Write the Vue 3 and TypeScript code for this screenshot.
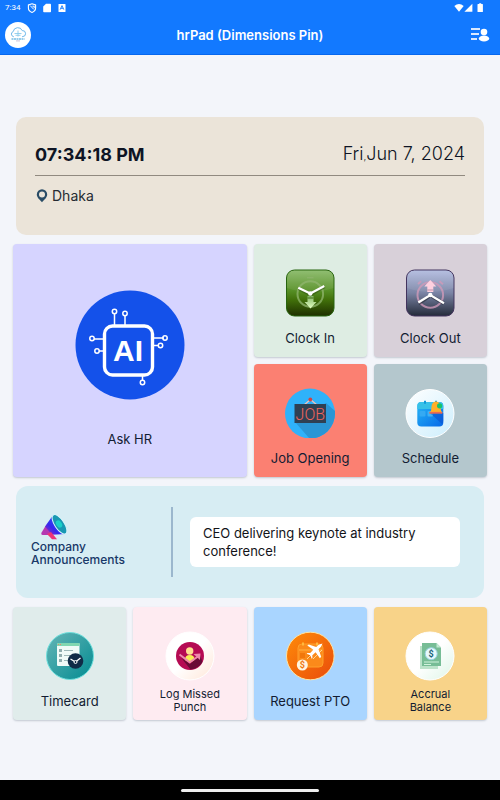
<script setup lang="ts">
import { ref } from 'vue'

const time = ref<string>('07:34:18 PM')
const weekday = ref<string>('Fri')
const date = ref<string>('Jun 7, 2024')
const city = ref<string>('Dhaka')
const announcement = ref<string>('CEO delivering keynote at industry conference!')
</script>

<template>
  <div class="screen">
    <header class="top">
      <div class="status">
        <span>7:34</span>
        <svg class="status-icon" viewBox="0 0 10 10" aria-hidden="true">
          <path d="M5 .8 8.600 2v3C8.600 7.200 7 8.700 5 9.400 3 8.700 1.400 7.200 1.400 5V2z" fill="none" stroke="#fff" stroke-width="1.100" />
          <path d="M3.200 2.600 6.800 6.400M5.400 3.200h1.800v2" fill="none" stroke="#fff" />
        </svg>
        <svg class="status-icon" viewBox="0 0 10 10" aria-hidden="true">
          <path d="M4 .7h4.200q.8 0 .8.8v7q0 .8-.8.8H2q-.8 0-.8-.8V3.600z" fill="#fff" />
        </svg>
        <svg class="status-icon" viewBox="0 0 10 10" aria-hidden="true">
          <rect x="1.500" y="1" width="7" height="8" rx=".6" fill="#fff" />
          <path d="m3.200 6.600 1.800-4 1.800 4M3.800 5.300h2.400" fill="none" stroke="#1279ff" stroke-width=".9" />
        </svg>
        <svg class="signal" viewBox="0 0 30 10" aria-hidden="true">
          <path d="M.3 3Q5 -.9 9.700 3L5 8.800z" fill="#fff" />
          <path d="M18.400.7v8h-8z" fill="#fff" />
          <path d="M24 1h1.200V.2h2V1h1.200q.5 0 .5.5v7q0 .5-.5.5H24q-.5 0-.5-.5v-7q0-.5.5-.5z" fill="#fff" />
        </svg>
      </div>
      <div class="bar">
        <button class="logo" type="button" aria-label="Home">
          <svg viewBox="0 0 26 26" aria-hidden="true">
            <path d="M9 14.600H8.400a2.600 2.600 0 0 1-.2-5 4.700 4.700 0 0 1 9-1 3 3 0 0 1 .7 6H17" fill="none" stroke="#6eb8ea" stroke-width="1" />
            <path d="M9.500 11.500h7M10.500 13.300h5M13 8.500v6" stroke="#8bccec" stroke-width=".9" />
            <path d="M6.500 17h13" stroke="#76bde5" stroke-width="1.400" stroke-dasharray="2 .5" />
            <path d="M11 18.900h4" stroke="#c3b3ce" stroke-width=".8" />
          </svg>
        </button>
        <h1>hrPad (Dimensions Pin)</h1>
        <button class="menu" type="button" aria-label="Employee list">
          <svg viewBox="0 0 20 16" aria-hidden="true">
            <path d="M1 2h9M1 7h8M1 12h6" stroke="#d9e9ff" stroke-width="2" />
            <circle cx="14" cy="5" r="3.300" fill="#fff" />
            <ellipse cx="14" cy="11.500" rx="5.200" ry="3" fill="#fff" />
          </svg>
        </button>
      </div>
    </header>

    <main>
      <section class="panel clock">
        <div class="clock-row">
          <time class="time">{{ time }}</time>
          <span class="date">{{ weekday }}<small>,</small>{{ date }}</span>
        </div>
        <div class="place">
          <svg viewBox="0 0 12 14" aria-hidden="true">
            <path d="M6 13.200C4.600 11.200.8 8.800.8 5.400a5.200 5.200 0 0 1 10.400 0c0 3.400-3.800 5.800-5.200 7.800z" fill="#294c66" />
            <circle cx="6" cy="5.400" r="3" fill="#ebe4d9" />
          </svg>
          <span>{{ city }}</span>
        </div>
      </section>

      <section class="tiles">
        <button class="tile big" type="button">
          <svg viewBox="0 0 110 110" aria-hidden="true">
            <circle cx="55" cy="55" r="54.500" fill="#1451ea" />
            <g fill="none" stroke="#fff">
              <rect x="29.500" y="36" width="48" height="49" rx="8" stroke-width="3.400" />
              <g stroke-width="1.500">
                <path d="M39.500 35V24M50 35V26M29 49H19M29 61h-5M79 48h10M79 55.500h5M67.500 86v4" />
                <circle cx="39.500" cy="21.500" r="2.200" />
                <circle cx="50" cy="23.500" r="2.200" />
                <circle cx="17" cy="48.500" r="2.200" />
                <circle cx="22" cy="61" r="2.200" />
                <circle cx="90" cy="48" r="2.200" />
                <circle cx="85.500" cy="55.500" r="2.200" />
                <circle cx="67.500" cy="92.500" r="2.200" />
              </g>
            </g>
            <text x="53" y="71" class="ai" text-anchor="middle" fill="#fff">AI</text>
          </svg>
          <span class="label">Ask HR</span>
        </button>

        <button class="tile clock-in" type="button">
          <svg viewBox="0 0 50 50" aria-hidden="true">
            <defs>
              <linearGradient id="inBg" x1="0" y1="0" x2="0" y2="1">
                <stop offset="0" stop-color="#89ba68" />
                <stop offset=".45" stop-color="#568f25" />
                <stop offset=".65" stop-color="#41700a" />
                <stop offset="1" stop-color="#1e2f00" />
              </linearGradient>
              <linearGradient id="inArrow" x1="0" y1="0" x2="0" y2="1">
                <stop offset="0" stop-color="#83b765" />
                <stop offset="1" stop-color="#e5ffc4" />
              </linearGradient>
            </defs>
            <rect x="1.500" y="2" width="47.500" height="46" rx="8" fill="url(#inBg)" stroke="#28640f" />
            <path d="M2 20q23 8 46.500 0V10q0-7.500-8-7.500h-31Q2 2.500 2 10z" fill="#fff" opacity=".07" />
            <g fill="none" stroke="#91b66f" opacity=".75">
              <circle cx="25.300" cy="26" r="12.800" stroke-width="2" />
              <path d="M22 9.700h6.500" stroke-width="1.300" />
            </g>
            <path d="M22.500 28h6v6h3l-6 6.500-6-6.500h3z" fill="url(#inArrow)" />
            <path d="M22.500 30h6" stroke="#416b17" />
            <path d="m13.500 20.500 12 6 14-8" fill="none" stroke="#304d12" stroke-width="3.500" opacity=".5" />
            <path d="m13.300 19.800 12 5.700 14-7.500" fill="none" stroke="#fff" stroke-width="2.300" />
            <circle cx="25.300" cy="25.500" r="2.200" fill="#fff" />
          </svg>
          <span class="label">Clock In</span>
        </button>

        <button class="tile clock-out" type="button">
          <svg viewBox="0 0 50 50" aria-hidden="true">
            <defs>
              <linearGradient id="outBg" x1="0" y1="0" x2="0" y2="1">
                <stop offset="0" stop-color="#b2bce0" />
                <stop offset=".5" stop-color="#7a83a4" />
                <stop offset="1" stop-color="#242b3a" />
              </linearGradient>
            </defs>
            <rect x="1.500" y="2" width="47.500" height="46" rx="8" fill="url(#outBg)" stroke="#43345e" />
            <path d="M2 20q23 8 46.500 0V10q0-7.500-8-7.500h-31Q2 2.500 2 10z" fill="#fff" opacity=".07" />
            <g fill="none" stroke="#d09ab9" stroke-width="2" opacity=".8">
              <circle cx="25.300" cy="27" r="12.800" />
              <path d="m13 16 3.200-2.800M34.500 13.200l3.500 3" />
            </g>
            <path d="m25.300 12 6 6.500h-3V24h-6v-5.500h-3z" fill="#ffd0df" />
            <path d="M22.300 22h6" stroke="#b992ac" />
            <path d="m13.500 35.500 12-8 13.500 8" fill="none" stroke="#242936" stroke-width="3.500" opacity=".6" />
            <path d="m13.300 34.500 12-7.500L39 35.200" fill="none" stroke="#fff" stroke-width="2.300" />
            <circle cx="25.300" cy="27" r="2.200" fill="#fff" />
          </svg>
          <span class="label">Clock Out</span>
        </button>

        <button class="tile job" type="button">
          <svg viewBox="0 0 50 50" aria-hidden="true">
            <circle cx="25" cy="25.500" r="25" fill="#2fb2fa" />
            <path d="m10 34 14.500 16.500A25 25 0 0 0 50 25v-2L41 15z" fill="#2a96d5" />
            <path d="m19 17 6.500-5.500L32 17" fill="none" stroke="#f5c1b8" stroke-width="1.200" />
            <circle cx="25.300" cy="11.500" r="1.900" fill="#d34242" />
            <rect x="9.500" y="16" width="31.500" height="19" fill="#2f4052" />
            <text x="25.300" y="31.500" class="job-text" text-anchor="middle" fill="#f0655c">JOB</text>
          </svg>
          <span class="label">Job Opening</span>
        </button>

        <button class="tile schedule" type="button">
          <svg viewBox="0 0 50 50" aria-hidden="true">
            <defs>
              <linearGradient id="calBg" x1="0" y1="0" x2="1" y2="1">
                <stop offset="0" stop-color="#25b7f6" />
                <stop offset="1" stop-color="#0869e8" />
              </linearGradient>
              <linearGradient id="calRing" x1="0" y1="0" x2="1" y2="1">
                <stop offset="0" stop-color="#fff" />
                <stop offset="1" stop-color="#cceefd" />
              </linearGradient>
            </defs>
            <circle cx="25" cy="25.500" r="24" fill="url(#calRing)" stroke="#fff" />
            <rect x="12.300" y="14" width="26" height="24.500" rx="4" fill="url(#calBg)" />
            <path d="M12.300 21v-3q0-4 4-4h18q4 0 4 4v3z" fill="#37c1e8" />
            <path d="M20 12.800v3M31 12.800v3" stroke="#1098da" stroke-width="2" />
            <rect x="14.500" y="23" width="6" height="5.500" rx="1" fill="#35aaf3" />
            <rect x="22.500" y="23" width="5.500" height="5.500" rx="1" fill="#3fb2f5" />
            <path d="m25 25 12 11q1-1 1.300-3v-8z" fill="#0749c9" opacity=".5" />
            <path d="M24.500 24.500q2-1.500 2-5c0-8 9-8 9 0q0 3.500 2 5z" fill="#ffaf28" />
            <path d="M24.300 24.800h13" stroke="#ed6950" stroke-width="1.800" />
            <circle cx="34.600" cy="17.800" r="2.600" fill="#15c36d" />
          </svg>
          <span class="label">Schedule</span>
        </button>
      </section>

      <section class="panel news">
        <div class="news-title">
          <svg viewBox="0 0 28 26" aria-hidden="true">
            <defs>
              <linearGradient id="horn" x1="0" y1="1" x2="1" y2="0">
                <stop offset="0" stop-color="#b32bb2" />
                <stop offset=".35" stop-color="#3428ee" />
                <stop offset="1" stop-color="#266cff" />
              </linearGradient>
            </defs>
            <path d="M1.300 19 5.500 12l7.500 8-2 1H2.500q-1.500 0-1.200-2z" fill="#b438b1" />
            <path d="M5 12.500 13 1.300 25.500 20l-13.500.7z" fill="url(#horn)" />
            <path d="m7 20 4-2 6 7.200h-5z" fill="#ee3477" />
            <ellipse cx="19.500" cy="10.300" rx="4.700" ry="11.200" transform="rotate(-34 19.500 10.300)" fill="#1898b2" stroke="#d9f5fb" stroke-width="1" />
            <ellipse cx="19" cy="10" rx="2.700" ry="4" transform="rotate(-34 19 10)" fill="#18d0c7" />
          </svg>
          <h2>Company Announcements</h2>
        </div>
        <div class="rule"></div>
        <p>{{ announcement }}</p>
      </section>

      <section class="tiles">
        <button class="tile timecard" type="button">
          <svg viewBox="0 0 50 50" aria-hidden="true">
            <defs>
              <linearGradient id="tcBg" x1="0" y1="0" x2="1" y2="1">
                <stop offset="0" stop-color="#65b5b6" />
                <stop offset="1" stop-color="#028b91" />
              </linearGradient>
            </defs>
            <circle cx="25" cy="25" r="23.500" fill="url(#tcBg)" stroke="#6edfdc" />
            <rect x="12" y="12" width="22.500" height="23" rx="1" fill="#effaf7" />
            <path d="M12 12h22.500v3H12z" fill="#80d7b1" />
            <path d="M13 13.500h1M15 13.500h1" stroke="#ef806d" />
            <g fill="#91adae"><rect x="14" y="18" width="3" height="3" /><rect x="14" y="23" width="3" height="3" /><rect x="14" y="28" width="3" height="3" /></g>
            <path d="M19 19.500h9M19 24.500h6M19 29.500h4" stroke="#9db9b9" stroke-width="1.200" />
            <circle cx="30.500" cy="30" r="7.800" fill="#102b47" />
            <path d="m25.500 28 5 3 5-4" fill="none" stroke="#fff" stroke-width="1.300" />
            <circle cx="30.500" cy="31" r="1.500" fill="#102b47" stroke="#fff" />
          </svg>
          <span class="label">Timecard</span>
        </button>

        <button class="tile missed" type="button">
          <svg viewBox="0 0 50 50" aria-hidden="true">
            <defs>
              <linearGradient id="msRing" x1="0" y1="0" x2="1" y2="1">
                <stop offset=".5" stop-color="#fff" />
                <stop offset="1" stop-color="#ffe6d7" />
              </linearGradient>
            </defs>
            <circle cx="25" cy="25" r="24" fill="url(#msRing)" stroke="#fff" />
            <circle cx="25" cy="25" r="14" fill="#b50b53" />
            <path d="m25 33-9-6.500 9.500 12q8-1 12-7.500L35 24z" fill="#690b36" />
            <circle cx="24.700" cy="20" r="3.700" fill="#ffdd92" />
            <path d="M20 29q0-5 4.800-5t4.700 5l-4.700 3z" fill="#f6ee54" />
            <path d="m14.500 23.500 10.200 7.700L33 25.500" fill="none" stroke="#ee8aad" stroke-width="2" />
            <path d="m28.500 23 7-.5-.5 6.500z" fill="#ee8aad" />
          </svg>
          <span class="label small">Log Missed<br />Punch</span>
        </button>

        <button class="tile pto" type="button">
          <svg viewBox="0 0 50 50" aria-hidden="true">
            <defs>
              <linearGradient id="ptoBg" x1="0" y1="0" x2="1" y2="1">
                <stop offset="0" stop-color="#ff8c09" />
                <stop offset="1" stop-color="#e94b0b" />
              </linearGradient>
            </defs>
            <circle cx="25.300" cy="25" r="23.800" fill="url(#ptoBg)" stroke="#ffe3a0" />
            <rect x="13" y="13" width="25" height="23" rx="4" fill="#fb8a1a" stroke="#ffa02a" />
            <path d="M18 11.500v3M32 11.500v3" stroke="#ffb83e" stroke-width="2" />
            <path d="M14 19h23" stroke="#ffa534" stroke-width="1.500" />
            <path d="M15 22h5v5h-5zM23 22h5v5h-5z" fill="#f1770b" />
            <path d="m22 28 12-12M28 28l9-9" stroke="#ffd58e" />
            <path d="m37.500 12.500-3.800 1.200-2.500 2.300-7.400-2.600-1.500 1.200 6 4.200-3.100 3.300-2.800-.2-.7.800 3.500 1.500 1.500 3.500.8-.8-.1-2.700 3.200-3 4.300 6 1.300-1.500-2.700-7.500 2.500-2.500z" fill="#fff" />
            <circle cx="17.300" cy="34" r="5.500" fill="#fff5df" />
            <text x="17.300" y="37.300" text-anchor="middle" class="dollar" fill="#f07812">$</text>
          </svg>
          <span class="label">Request PTO</span>
        </button>

        <button class="tile accrual" type="button">
          <svg viewBox="0 0 50 50" aria-hidden="true">
            <defs>
              <linearGradient id="acRing" x1="0" y1="0" x2="1" y2="1">
                <stop offset=".5" stop-color="#fff" />
                <stop offset="1" stop-color="#ddf5e7" />
              </linearGradient>
            </defs>
            <circle cx="25" cy="25" r="24" fill="url(#acRing)" stroke="#fff" />
            <path d="M15 15h18v23H15z" fill="#bce3ca" />
            <path d="M17 12h14.500l4.500 4.500v18.500H17z" fill="#77bd96" />
            <path d="M31.500 12v4.500H36z" fill="#c0e9d1" />
            <circle cx="26.200" cy="22.700" r="6" fill="#e8f9fb" stroke="#9ad2e2" />
            <text x="26.200" y="26" text-anchor="middle" class="dollar" fill="#17617a">$</text>
            <path d="M19 31h15M19 33.500h7" stroke="#d1f3dc" />
          </svg>
          <span class="label small">Accrual<br />Balance</span>
        </button>
      </section>
    </main>

    <footer><span></span></footer>
  </div>
</template>

<style>
body {
  margin: 0;
  background: #f3f5fa;
}
</style>

<style scoped>
.screen {
  display: flex;
  flex-direction: column;
  min-height: 100vh;
  background: #f3f5fa;
  font-family: Inter, "Open Sans", sans-serif;
  color: #121c32;
}

button {
  border: 0;
  padding: 0;
  font: inherit;
  color: inherit;
  cursor: pointer;
}

svg {
  display: block;
  flex: none;
}

.top {
  background: #1279ff;
  border-bottom: 1px solid #0667ee;
  color: #fff;
}

.status {
  display: flex;
  align-items: center;
  gap: 5px;
  height: 15px;
  padding: 0 16px 0 5px;
  font: 8px/15px Roboto, sans-serif;
}

.status-icon {
  width: 10px;
  height: 10px;
}

.status span {
  margin-right: 2px;
}

.signal {
  width: 30px;
  height: 10px;
  margin-left: auto;
}

.bar {
  display: grid;
  grid-template-columns: 26px 1fr 26px;
  align-items: center;
  height: 39px;
  padding: 0 5px;
}

.logo {
  width: 26px;
  height: 26px;
  border-radius: 50%;
  background: #fff;
}

.logo svg {
  width: 26px;
}

h1 {
  margin: 0;
  font-size: 13px;
  font-weight: 600;
  line-height: 20px;
  text-align: center;
}

.menu {
  background: none;
}

.menu svg {
  width: 20px;
  height: 16px;
  margin-left: auto;
  margin-right: 5px;
}

main {
  flex: 1;
  display: flex;
  flex-direction: column;
  gap: 9px;
  padding: 62px 13px 24px;
}

.panel {
  margin: 0 3px;
  box-sizing: border-box;
}

.clock {
  min-height: 118px;
  padding: 25px 19px;
  border-radius: 10px;
  background: #ebe4d9;
}

.clock-row {
  display: flex;
  justify-content: space-between;
  align-items: center;
  padding-bottom: 7px;
  border-bottom: 1px solid #918a80;
  line-height: 24px;
  color: #0e1424;
}

.time {
  font-size: 18px;
  font-weight: 700;
}

.date {
  font-size: 18px;
  font-weight: 300;
}

.date small {
  font-size: 10px;
}

.place {
  display: flex;
  align-items: center;
  gap: 4px;
  padding: 10px 1px 0;
  font-size: 14px;
  line-height: 20px;
  color: #252b33;
}

.place svg {
  width: 12px;
  height: 14px;
}

.tiles {
  display: grid;
  grid-template-columns: repeat(4, 1fr);
  grid-auto-rows: 113px;
  gap: 7px;
}

.tile {
  display: flex;
  flex-direction: column;
  align-items: center;
  padding-top: 24px;
  border-radius: 4px;
  box-shadow: 0 1px 2px #7e879566;
}

.tile > svg {
  width: 50px;
  height: 50px;
}

.label {
  flex: 1;
  display: flex;
  align-items: center;
  font-size: 13px;
  line-height: 16px;
}

.small {
  font-size: 11px;
  line-height: 13px;
}

.big {
  grid-column: span 2;
  grid-row: span 2;
  padding-top: 46px;
  background: #d6d4ff;
}

.big > svg {
  width: 110px;
  height: 110px;
}

.ai {
  font: 700 30px "Liberation Sans", sans-serif;
}

.job-text {
  font: 300 16px Roboto, sans-serif;
}

.dollar {
  font: 700 9px Roboto, sans-serif;
}

.clock-in { background: #deede3; }
.clock-out { background: #d8d0d9; }
.job { background: #fb8072; }
.schedule { background: #b4c7cd; }
.timecard { background: #e0eceb; }
.missed { background: #feebf1; }
.pto { background: #a9d5ff; }
.accrual { background: #f8d389; }

.news {
  display: grid;
  grid-template-columns: 140px 2px 1fr;
  align-items: center;
  min-height: 112px;
  padding: 0 24px 0 15px;
  border-radius: 12px;
  background: #d7edf3;
}

.news-title {
  padding-bottom: 5px;
}

.news-title svg {
  width: 28px;
  height: 26px;
  margin-left: 9px;
}

h2 {
  margin: 0;
  width: 100px;
  font-size: 12px;
  font-weight: 500;
  line-height: 13px;
  color: #183868;
}

.rule {
  height: 70px;
  background: #9bb7cd;
}

.news p {
  margin: 0 0 0 17px;
  padding: 7px 13px;
  border-radius: 6px;
  background: #fff;
  font-size: 13px;
  line-height: 18px;
  color: #121318;
}

footer {
  display: flex;
  align-items: center;
  justify-content: center;
  height: 20px;
  background: #000;
}

footer span {
  width: 138px;
  height: 3px;
  border-radius: 2px;
  background: #eee;
}
</style>
